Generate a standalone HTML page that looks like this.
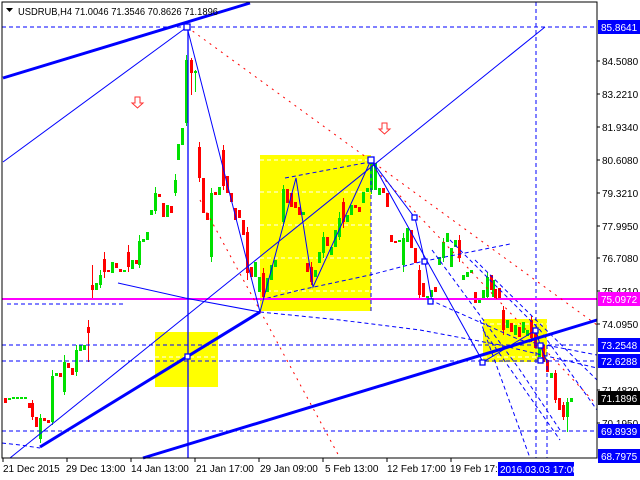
<!DOCTYPE html>
<html><head><meta charset="utf-8"><style>
html,body{margin:0;padding:0;background:#fff;width:640px;height:480px;overflow:hidden}
svg{display:block;font-family:"Liberation Sans",sans-serif}
</style></head><body>
<svg width="640" height="480" xmlns="http://www.w3.org/2000/svg">
<rect width="640" height="480" fill="#fff"/>
<rect x="155" y="332" width="63" height="55" fill="#ffff00"/>
<rect x="260" y="155" width="111" height="156" fill="#ffff00"/>
<rect x="483" y="319" width="64" height="43" fill="#ffff00"/>
<g stroke="#fff" stroke-dasharray="4,3" stroke-width="1">
<line x1="260" y1="160" x2="371" y2="160"/><line x1="260" y1="192" x2="371" y2="192"/><line x1="260" y1="225" x2="371" y2="225"/><line x1="260" y1="258" x2="371" y2="258"/><line x1="260" y1="291" x2="371" y2="291"/>
<line x1="155" y1="357" x2="218" y2="357"/><line x1="483" y1="324" x2="547" y2="324"/><line x1="483" y1="357" x2="547" y2="357"/>
</g>
<!-- candles green -->
<g fill="none" stroke-width="3">
<path stroke="#00e000" d="M9.5 398V400M13.5 397V399M17.5 397V399M21.5 397V399M25.5 397V399M40.5 418V439M52.5 376V422M56.5 373V376M64.5 362V392M76.5 350V372M80.5 345V351M84.5 345V350M96.5 283V290M100.5 275V285M112.5 262V273M124.5 270V272M132.5 260V269M139.5 241V265M143.5 239V242M147.5 232V240M151.5 210V215M155.5 193V211M167.5 205V217M175.5 180V193M178.5 144V160M182.5 128V145M186.5 60V123M195.5 71V73M211.5 193V257M219.5 187V195M255.5 262V277M259.5 277V292M267.5 278V292M271.5 265V280M275.5 260V267M283.5 189V222M303.5 212V215M315.5 270V277M319.5 252V263M323.5 237V253M331.5 247V255M335.5 230V247M339.5 218V237M347.5 215V222M351.5 205V215M363.5 192V203M367.5 188V192M371.5 163V190M375.5 163V190M379.5 188V195M399.5 240V242M403.5 238V265M407.5 228V242M427.5 296V300M431.5 290V297M439.5 257V265M443.5 242V258M447.5 233V242M451.5 248V267M455.5 240V247M463.5 275V280M467.5 272V277M471.5 270V273M479.5 300V303M483.5 290V298M487.5 277V297M493.5 280V297M507.5 320V328M515.5 325V335M523.5 322V333M527.5 330V336M539.5 347V357M551.5 373V378M567.5 402V417M571.5 398V402"/>
<path stroke="#ff0000" d="M5.5 398V403M29.5 403V408M32.5 403V417M36.5 417V427M44.5 418V421M48.5 420V423M60.5 373V377M68.5 363V368M72.5 368V375M88.5 327V333M92.5 285V290M104.5 259V272M108.5 270V272M116.5 263V268M120.5 269V272M128.5 252V267M136.5 260V264M159.5 194V197M163.5 203V217M171.5 206V213M191.5 60V73M199.5 147V178M203.5 178V213M207.5 213V220M215.5 192V195M223.5 150V186M227.5 176V193M231.5 193V202M235.5 208V220M239.5 210V218M243.5 220V235M247.5 232V273M251.5 267V277M263.5 273V297M287.5 189V203M291.5 193V207M295.5 202V208M299.5 207V215M307.5 263V272M311.5 267V282M327.5 237V246M343.5 202V222M355.5 205V208M359.5 207V212M383.5 188V193M387.5 193V207M391.5 235V242M395.5 241V243M411.5 230V248M415.5 248V263M419.5 270V295M423.5 283V297M435.5 287V292M459.5 240V258M475.5 292V303M491.5 275V290M495.5 289V300M499.5 288V300M503.5 310V330M511.5 323V332M519.5 327V337M531.5 320V338M535.5 330V348M543.5 345V362M547.5 360V372M555.5 373V400M559.5 398V410M563.5 405V417"/>
</g>
<g fill="none" stroke-width="1">
<path stroke="#00e000" d="M40.5 414V443M52.5 370V425M64.5 355V395M76.5 345V376M100.5 270V288M139.5 235V268M155.5 187V214M175.5 174V196M186.5 55V126M195.5 70V92M211.5 188V262M283.5 185V226M323.5 232V258M339.5 212V240M371.5 158V194M403.5 233V272M443.5 238V262M487.5 272V300M567.5 398V432"/>
<path stroke="#ff0000" d="M32.5 400V420M88.5 320V362M92.5 265V300M104.5 252V278M128.5 245V272M191.5 58V95M199.5 142V182M223.5 145V190M247.5 227V280M263.5 268V300M311.5 262V285M343.5 198V228M419.5 265V300M459.5 235V262M503.5 306V335M531.5 316V342M555.5 370V403M563.5 402V420"/>
</g>
<g stroke="#0000ff" stroke-dasharray="4,3" stroke-width="1" fill="none">
<line x1="2" y1="27" x2="597" y2="27"/>
<line x1="2" y1="345" x2="597" y2="345"/>
<line x1="2" y1="361" x2="597" y2="361"/>
<line x1="2" y1="431" x2="597" y2="431"/>
<line x1="7" y1="304" x2="124" y2="304"/>
<line x1="536" y1="2" x2="536" y2="458"/>
<line x1="547" y1="345" x2="547" y2="458"/>
<line x1="371" y1="160" x2="371" y2="311"/>
<polyline points="260,300 300,290 370,275 420,262 470,252 510,244"/>
<polyline points="260,312 340,320 420,330 500,345 597,368"/>
<polyline points="285,178 370,162"/>
<polyline points="432,250 520,370 560,430"/>
<polyline points="450,240 540,330 597,410"/>
<polyline points="475,260 597,380"/>
<polyline points="430,300 520,340 597,355"/>
<polyline points="483,330 560,440"/>
<polyline points="480,320 530,458"/>
<polyline points="2,443 20,445 40,448"/>
</g>
<line x1="2" y1="299" x2="597" y2="299" stroke="#ff00ff" stroke-width="2"/>
<g stroke="#ff0000" stroke-dasharray="2,5" stroke-width="1" fill="none">
<line x1="187" y1="27" x2="597" y2="325"/>
<line x1="371" y1="165" x2="597" y2="405"/>
<line x1="200" y1="200" x2="340" y2="458"/>
</g>
<g stroke="#0000ff" fill="none">
<line x1="3" y1="78" x2="250" y2="3" stroke-width="3"/>
<line x1="3" y1="162" x2="187" y2="27"/>
<line x1="10" y1="458" x2="545" y2="27"/>
<line x1="188" y1="27" x2="188" y2="458" stroke-width="1.3"/>
<line x1="40" y1="447" x2="260" y2="312" stroke-width="3"/>
<line x1="143" y1="458" x2="597" y2="320" stroke-width="3"/>
<polyline points="118,283 185,298 260,312"/>
<polyline points="187,27 260,312 296,178 313,287 371,160 415,218 425,262 432,302"/>
<polyline points="371,160 483,362 536,330 540,345 547,362"/>
<g stroke-width="1.3" fill="#fff">
<rect x="184" y="24" width="6" height="6"/><rect x="185" y="354" width="5" height="5"/>
<rect x="368" y="157" width="6" height="6"/><rect x="412" y="215" width="5" height="5"/>
<rect x="422" y="259" width="5" height="5"/><rect x="428" y="299" width="5" height="5"/>
<rect x="480" y="360" width="5" height="5"/><rect x="533" y="328" width="5" height="5"/>
<rect x="538" y="343" width="5" height="5"/><rect x="538" y="358" width="5" height="5"/>
</g>
</g>
<g stroke="#ff3030" fill="#fff" stroke-width="1">
<path d="M135,97h5v6h3l-5.5,5l-5.5,-5h3z"/>
<path d="M382,123h5v6h3l-5.5,5l-5.5,-5h3z"/>
</g>
<rect x="2" y="2" width="595" height="456" fill="none" stroke="#000" stroke-width="1"/>
<path d="M6,8h7l-3.5,4z" fill="#000"/>
<text x="18" y="15" font-size="10" fill="#000" textLength="200" lengthAdjust="spacingAndGlyphs">USDRUB,H4  71.0046 71.3546 70.8626 71.1896</text>
<g font-size="10" fill="#000" stroke="none">
<g stroke="#000"><line x1="597" x2="600" y1="61" y2="61"/><line x1="597" x2="600" y1="94" y2="94"/><line x1="597" x2="600" y1="127" y2="127"/><line x1="597" x2="600" y1="160" y2="160"/><line x1="597" x2="600" y1="193" y2="193"/><line x1="597" x2="600" y1="226" y2="226"/><line x1="597" x2="600" y1="258" y2="258"/><line x1="597" x2="600" y1="291" y2="291"/><line x1="597" x2="600" y1="324" y2="324"/><line x1="597" x2="600" y1="390" y2="390"/><line x1="597" x2="600" y1="423" y2="423"/></g>
<text x="602" y="65">84.5080</text><text x="602" y="98">83.2210</text><text x="602" y="131">81.9340</text><text x="602" y="164">80.6080</text><text x="602" y="197">79.3210</text><text x="602" y="230">77.9950</text><text x="602" y="262">76.7080</text><text x="602" y="295">75.4210</text><text x="602" y="328">74.0950</text><text x="602" y="394">71.4820</text><text x="602" y="427">70.1950</text>
</g>
<g font-size="10">
<rect x="598" y="20" width="42" height="14" fill="#0000ff"/><text x="601" y="31" fill="#fff">85.8641</text>
<rect x="598" y="292" width="42" height="14" fill="#ff00ff"/><text x="601" y="303" fill="#fff">75.0972</text>
<rect x="598" y="338" width="42" height="14" fill="#0000ff"/><text x="601" y="349" fill="#fff">73.2548</text>
<rect x="598" y="354" width="42" height="14" fill="#0000ff"/><text x="601" y="365" fill="#fff">72.6288</text>
<rect x="598" y="391" width="42" height="14" fill="#000"/><text x="601" y="402" fill="#fff">71.1896</text>
<rect x="598" y="424" width="42" height="14" fill="#0000ff"/><text x="601" y="435" fill="#fff">69.8939</text>
<rect x="598" y="449" width="42" height="14" fill="#0000ff"/><text x="601" y="460" fill="#fff">68.7975</text>
</g>
<g font-size="10" fill="#000">
<g stroke="#000"><line x1="3" y1="458" x2="3" y2="462"/><line x1="67" y1="458" x2="67" y2="462"/><line x1="131" y1="458" x2="131" y2="462"/><line x1="195" y1="458" x2="195" y2="462"/><line x1="259" y1="458" x2="259" y2="462"/><line x1="323" y1="458" x2="323" y2="462"/><line x1="387" y1="458" x2="387" y2="462"/><line x1="451" y1="458" x2="451" y2="462"/></g>
<text x="3" y="472">21 Dec 2015</text>
<text x="66" y="472">29 Dec 13:00</text>
<text x="131" y="472">14 Jan 13:00</text>
<text x="196" y="472">21 Jan 17:00</text>
<text x="260" y="472">29 Jan 09:00</text>
<text x="325" y="472">5 Feb 13:00</text>
<text x="387" y="472">12 Feb 17:00</text>
<rect x="448" y="462" width="50" height="14" fill="#fff"/>
<text x="450" y="472">19 Feb 17:</text>
<rect x="498" y="462" width="76" height="14" fill="#0000ff"/>
<text x="500" y="473" fill="#fff">2016.03.03 17:00</text>
</g>
</svg>
</body></html>
